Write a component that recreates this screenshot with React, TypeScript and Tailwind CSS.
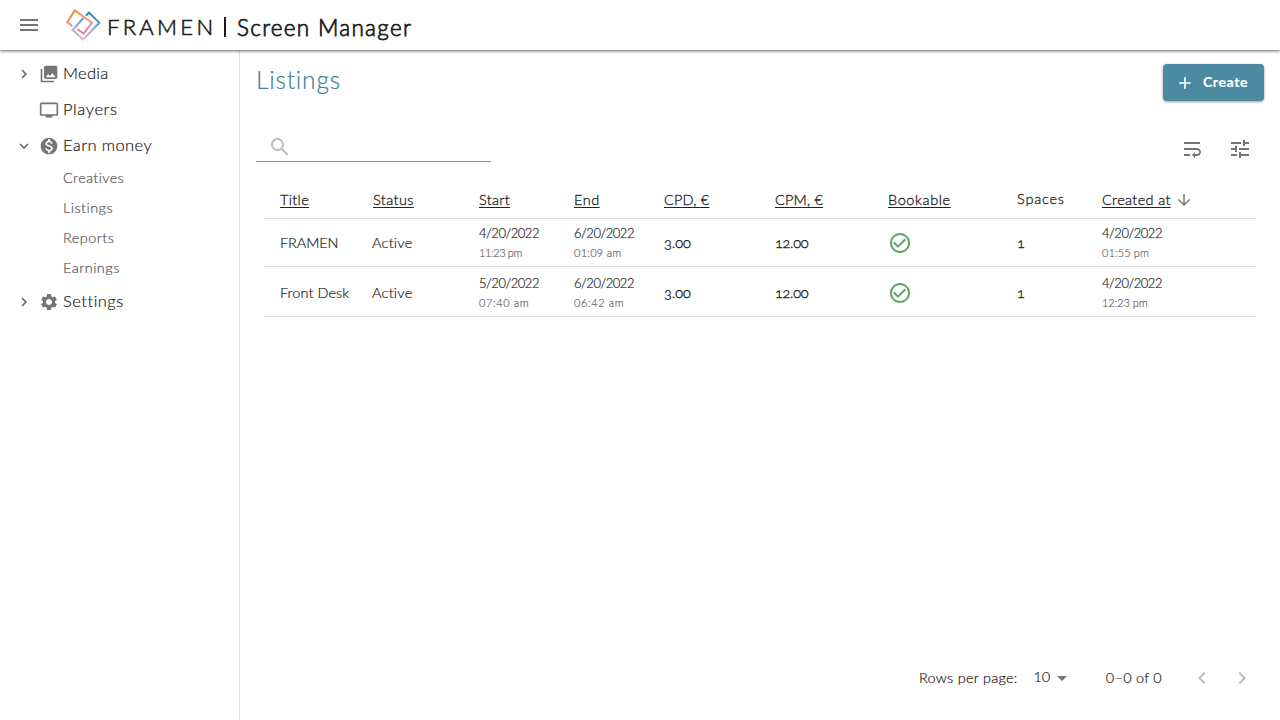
import type { ReactNode } from "react";
import {
  MdAdd,
  MdArrowDownward,
  MdArrowDropDown,
  MdCheckCircleOutline,
  MdChevronLeft,
  MdChevronRight,
  MdCollections,
  MdExpandMore,
  MdMenu,
  MdMonetizationOn,
  MdSearch,
  MdSettings,
  MdTune,
  MdTv,
  MdWrapText,
} from "react-icons/md";

const GRID =
  "grid grid-cols-[92px_107px_95px_90px_111px_114px_128px_85px_170px] items-center border-b border-[#e0e0e0]";

const columns = [
  { label: "Title", cls: "tracking-[0.35px]" },
  { label: "Status", cls: "tracking-[0.4px] ml-px" },
  { label: "Start", cls: "tracking-[0.3px]" },
  { label: "End", cls: "tracking-[0.5px]" },
  { label: "CPD, €", cls: "tracking-[0.2px]" },
  { label: "CPM, €", cls: "tracking-[0.2px]" },
  { label: "Bookable", cls: "tracking-[0.6px] -ml-px" },
  { label: "Spaces", cls: "tracking-[0.8px]", plain: true },
  { label: "Created at", cls: "tracking-[0.35px]", sorted: true },
];

const listings = [
  {
    title: "FRAMEN",
    titleCls: "tracking-[-0.1px]",
    start: ["4/20/2022", "11:23 pm", "tracking-[-0.4px]"],
    end: ["6/20/2022", "01:09 am", "tracking-[0.25px]"],
    created: ["4/20/2022", "01:55 pm", "tracking-[0.1px]"],
    height: "h-12",
  },
  {
    title: "Front Desk",
    titleCls: "tracking-[0.05px]",
    start: ["5/20/2022", "07:40 am", "tracking-[0.6px]"],
    end: ["6/20/2022", "06:42 am", "tracking-[0.6px]"],
    created: ["4/20/2022", "12:23 pm", "tracking-[-0.05px]"],
    height: "h-[50px] pt-0.5",
  },
];

const earnLinks = [
  { label: "Creatives", cls: "tracking-[0.35px]" },
  { label: "Listings", cls: "tracking-[0.45px]" },
  { label: "Reports", cls: "tracking-[0.45px]" },
  { label: "Earnings", cls: "tracking-[0.45px]" },
];

function Logo() {
  return (
    <svg width="36" height="34" viewBox="0 0 36 34" fill="none" className="shrink-0" strokeWidth="2">
      <defs>
        <linearGradient id="warm" x1="9" y1="2" x2="19" y2="26" gradientUnits="userSpaceOnUse">
          <stop stopColor="#f08a24" />
          <stop offset="0.55" stopColor="#f29a86" />
          <stop offset="1" stopColor="#ee6fb0" />
        </linearGradient>
        <linearGradient id="cool" x1="24" y1="4" x2="17" y2="33" gradientUnits="userSpaceOnUse">
          <stop stopColor="#1487b8" />
          <stop offset="0.5" stopColor="#8ba9cf" />
          <stop offset="1" stopColor="#f7b3d4" />
        </linearGradient>
      </defs>
      <path d="M7.5 18.3 2.3 14.2 9.8 2.4 26.9 14.8 18.7 25.5 12.2 21.2" stroke="url(#warm)" />
      <path d="M20.9 7.8 23.9 4.6 34.4 14.8 17.9 31.6 7.7 22 18.4 10.2" stroke="url(#cool)" />
    </svg>
  );
}

function NavItem({ chevron, icon, label, cls }: { chevron?: ReactNode; icon: ReactNode; label: string; cls: string }) {
  return (
    <a className="flex h-9 items-center pl-[15px] text-[16.5px] text-[#212121]">
      <span className="w-6 text-lg text-[#616161]">{chevron}</span>
      <span className="w-6 text-xl text-[#757575]">{icon}</span>
      <span className={`pb-0.5 ${cls}`}>{label}</span>
    </a>
  );
}

function Sidebar() {
  return (
    <nav className="w-60 shrink-0 border-r border-[#e0e0e0] pt-1.5">
      <NavItem chevron={<MdChevronRight />} icon={<MdCollections />} label="Media" cls="tracking-[0.3px]" />
      <NavItem icon={<MdTv />} label="Players" cls="tracking-[0.6px]" />
      <NavItem chevron={<MdExpandMore />} icon={<MdMonetizationOn />} label="Earn money" cls="tracking-[0.4px]" />
      <div className="pl-[63px] text-[14.5px] text-[#555]">
        {earnLinks.map((l) => (
          <a key={l.label} className={`flex h-[30px] items-center pb-0.5 ${l.cls}`}>
            {l.label}
          </a>
        ))}
      </div>
      <NavItem chevron={<MdChevronRight />} icon={<MdSettings />} label="Settings" cls="tracking-[0.5px]" />
    </nav>
  );
}

function DateCell({ value }: { value: string[] }) {
  return (
    <div className="pl-4">
      <div className="text-[13px] leading-5 tracking-[-0.45px] text-[#222]">{value[0]}</div>
      <div className={`text-[11px] leading-[19px] text-[#666] ${value[2]}`}>{value[1]}</div>
    </div>
  );
}

function ListingsTable() {
  return (
    <div className="mx-2 mt-5 text-[14.5px] text-[#222]">
      <div className={`${GRID} h-[37px] [-webkit-text-stroke:0.3px]`}>
        {columns.map((c) => (
          <div key={c.label} className="flex items-center pl-4">
            <span className={`${c.cls} ${c.plain ? "pb-0.5" : "underline decoration-1 underline-offset-2"}`}>
              {c.label}
            </span>
            {c.sorted && <MdArrowDownward className="ml-1 text-lg text-[#757575]" />}
          </div>
        ))}
      </div>
      {listings.map((l) => (
        <div key={l.title} className={`${GRID} ${l.height}`}>
          <div className={`pl-4 ${l.titleCls}`}>{l.title}</div>
          <div className="pl-4 tracking-[0.25px]">Active</div>
          <DateCell value={l.start} />
          <DateCell value={l.end} />
          <div className="pl-4 oldstyle-nums [-webkit-text-stroke:0.35px]">3.00</div>
          <div className="pl-4 tracking-[-0.3px] oldstyle-nums [-webkit-text-stroke:0.35px]">12.00</div>
          <div className="pl-[15px]">
            <MdCheckCircleOutline className="text-2xl text-[#5fa463]" />
          </div>
          <div className="pl-4 oldstyle-nums [-webkit-text-stroke:0.35px]">1</div>
          <DateCell value={l.created} />
        </div>
      ))}
    </div>
  );
}

function Pagination() {
  return (
    <div className="mt-auto mb-[30px] flex h-6 items-center justify-end pr-2.5 text-[14.5px] text-[#222]">
      <span className="tracking-[0.25px]">Rows per page:</span>
      <span className="ml-4 pb-0.5 tracking-[-0.3px]">10</span>
      <MdArrowDropDown className="text-2xl text-[#757575]" />
      <span className="ml-8 tracking-[0.25px]">0–0 of 0</span>
      <MdChevronLeft className="ml-7 text-2xl text-[#bdbdbd]" />
      <MdChevronRight className="ml-4 text-2xl text-[#bdbdbd]" />
    </div>
  );
}

export default function App() {
  return (
    <div className="flex h-screen flex-col overflow-hidden bg-white font-['Lato',sans-serif] font-light [-webkit-text-stroke:0.2px]">
      <header className="z-10 flex h-[50px] shrink-0 items-center bg-white pl-[17px] text-[#1d1d1d] shadow-[0_1px_3px_rgba(0,0,0,0.6)]">
        <MdMenu className="text-2xl text-[#757575]" />
        <div className="ml-6 flex items-center">
          <Logo />
          <span className="ml-1.5 w-[117px] pt-[3px] text-[22px] tracking-[3.3px] [-webkit-text-stroke:0.6px]">
            FRAMEN
          </span>
          <span className="mt-1 h-5 w-0.5 bg-[#1d1d1d]" />
          <span className="ml-[11px] pt-[5px] text-[22.5px] tracking-[1.3px] [-webkit-text-stroke:0.75px]">
            Screen Manager
          </span>
        </div>
      </header>
      <div className="flex min-h-0 flex-1">
        <Sidebar />
        <main className="flex flex-1 flex-col px-4 pt-3.5">
          <div className="flex h-[37px] items-start justify-between">
            <h1 className="text-[24.5px] leading-8 tracking-[0.8px] text-[#3f829b]">Listings</h1>
            <button className="flex h-[37px] items-center rounded bg-[#4b8aa1] pr-4 pl-3 text-sm font-bold text-white shadow-[0_1px_3px_rgba(0,0,0,0.4)]">
              <MdAdd className="mr-2 text-xl" />
              <span className="pb-0.5 tracking-[0.6px]">Create</span>
            </button>
          </div>
          <div className="mt-[34px] flex h-[27px] items-start justify-between">
            <div className="h-[27px] w-[235px] border-b border-[#8c8c8c] pl-3">
              <MdSearch className="text-2xl text-[#bdbdbd]" />
            </div>
            <div className="flex gap-6 pt-0.5 pr-3 text-2xl text-[#757575]">
              <MdWrapText />
              <MdTune />
            </div>
          </div>
          <ListingsTable />
          <Pagination />
        </main>
      </div>
    </div>
  );
}
